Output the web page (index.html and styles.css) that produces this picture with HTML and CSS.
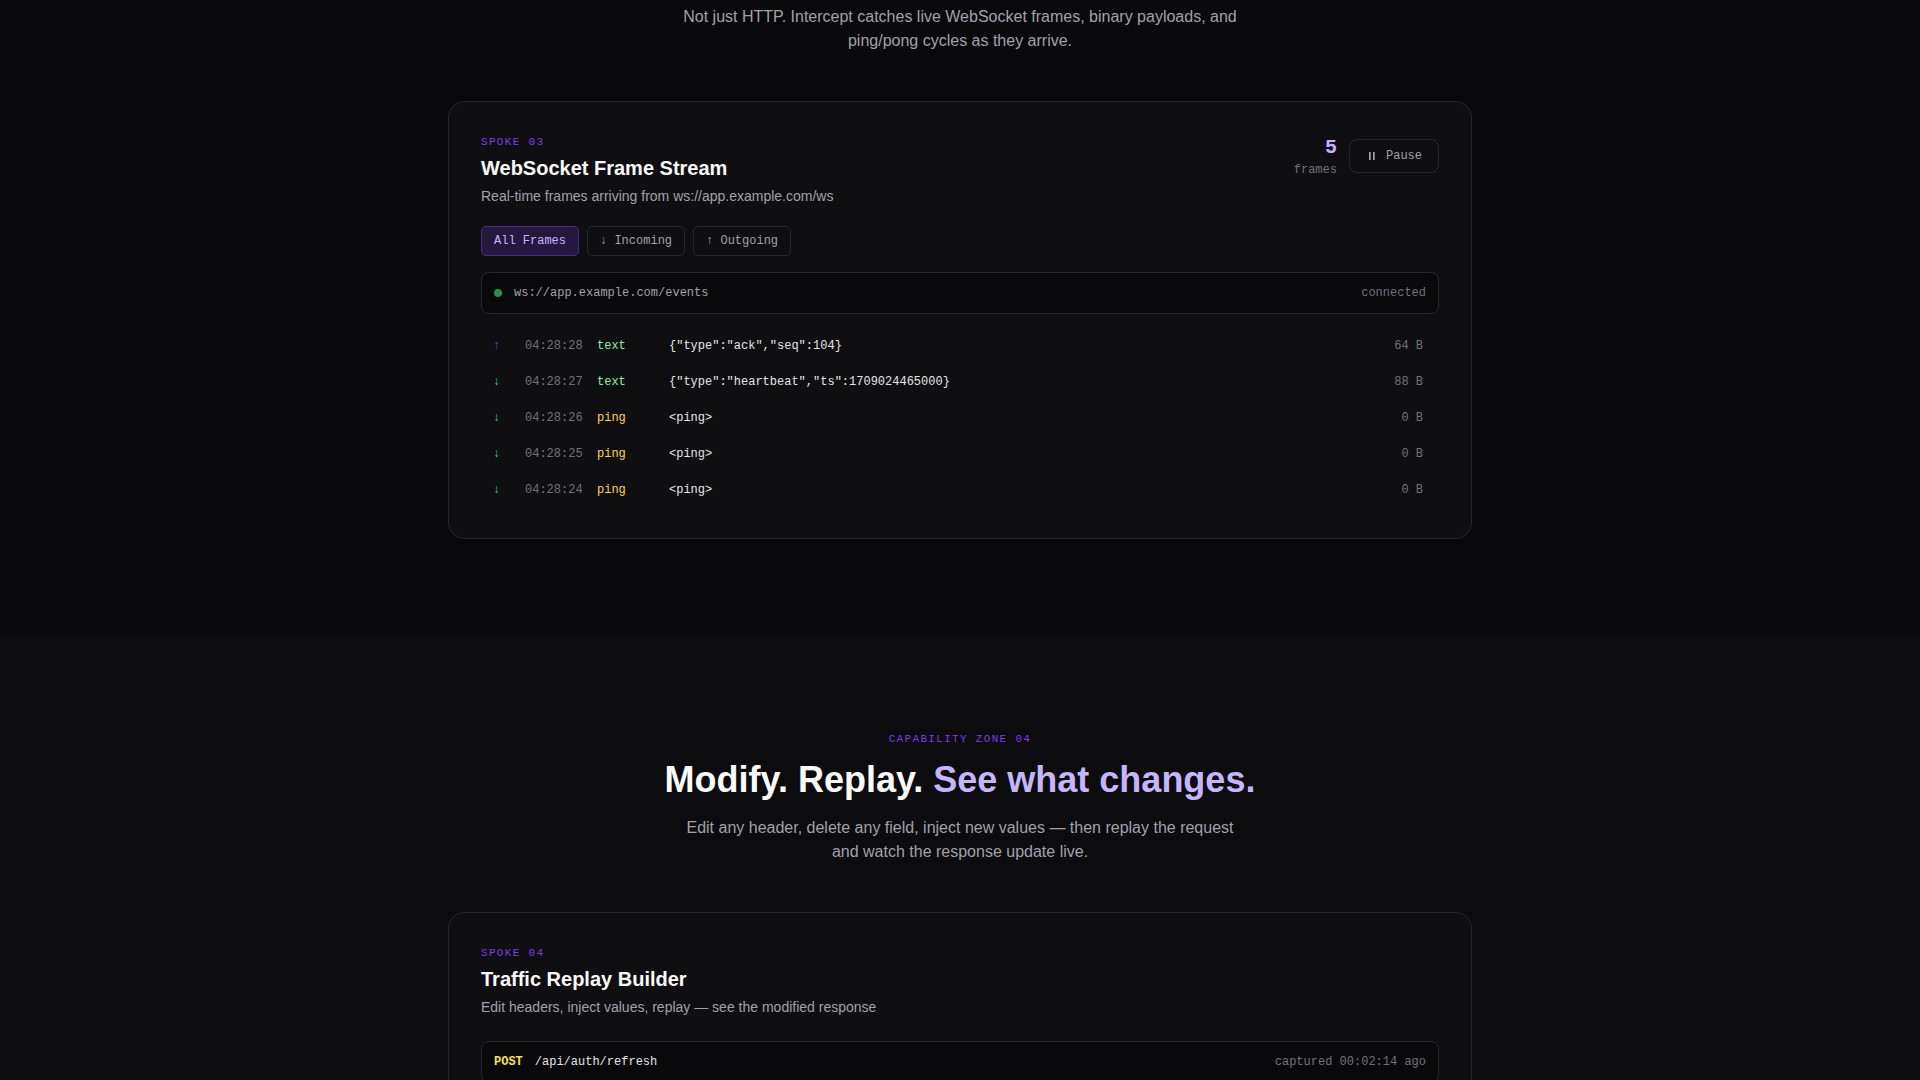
FILE: index.html
```html
<!DOCTYPE html>
<html lang="en">
<head>
  <meta charset="UTF-8">
  <meta name="viewport" content="width=device-width, initial-scale=1.0">
  <title>Intercept</title>
  <link rel="stylesheet" href="styles.css">
</head>
<body>

  <!-- Zone 03: WebSocket -->
  <section class="zone zone-first">
    <p class="zone-text">Not just HTTP. Intercept catches live WebSocket frames, binary payloads, and ping/pong cycles as they arrive.</p>

    <div class="card">
      <div class="card-header">
        <div>
          <div class="eyebrow">SPOKE 03</div>
          <h3 class="card-title">WebSocket Frame Stream</h3>
          <p class="card-desc">Real-time frames arriving from ws://app.example.com/ws</p>
        </div>
        <div class="card-actions">
          <div class="counter">
            <div class="counter-value">5</div>
            <div class="counter-label">frames</div>
          </div>
          <button type="button" class="btn-pause">
            <svg width="12" height="12" viewBox="0 0 12 12" fill="currentColor" aria-hidden="true">
              <rect x="3" y="2" width="1.7" height="8"/>
              <rect x="7" y="2" width="1.7" height="8"/>
            </svg>
            Pause
          </button>
        </div>
      </div>

      <div class="filters">
        <button type="button" class="filter active">All Frames</button>
        <button type="button" class="filter">↓ Incoming</button>
        <button type="button" class="filter">↑ Outgoing</button>
      </div>

      <div class="bar">
        <span class="dot"></span>
        <span class="bar-url">ws://app.example.com/events</span>
        <span class="bar-meta">connected</span>
      </div>

      <div class="frame-list">
        <table class="frames">
          <tbody>
            <tr>
              <td class="dir out">↑</td>
              <td class="time">04:28:28</td>
              <td class="kind text">text</td>
              <td class="payload">{"type":"ack","seq":104}</td>
              <td class="size">64 B</td>
            </tr>
            <tr>
              <td class="dir in">↓</td>
              <td class="time">04:28:27</td>
              <td class="kind text">text</td>
              <td class="payload">{"type":"heartbeat","ts":1709024465000}</td>
              <td class="size">88 B</td>
            </tr>
            <tr>
              <td class="dir in">↓</td>
              <td class="time">04:28:26</td>
              <td class="kind ping">ping</td>
              <td class="payload">&lt;ping&gt;</td>
              <td class="size">0 B</td>
            </tr>
            <tr>
              <td class="dir in">↓</td>
              <td class="time">04:28:25</td>
              <td class="kind ping">ping</td>
              <td class="payload">&lt;ping&gt;</td>
              <td class="size">0 B</td>
            </tr>
            <tr>
              <td class="dir in">↓</td>
              <td class="time">04:28:24</td>
              <td class="kind ping">ping</td>
              <td class="payload">&lt;ping&gt;</td>
              <td class="size">0 B</td>
            </tr>
          </tbody>
        </table>
      </div>
    </div>
  </section>

  <!-- Zone 04: Replay -->
  <section class="zone zone-alt">
    <div class="eyebrow zone-eyebrow">CAPABILITY ZONE 04</div>
    <h2 class="zone-title">Modify. Replay. <span class="accent">See what changes.</span></h2>
    <p class="zone-text">Edit any header, delete any field, inject new values — then replay the request and watch the response update live.</p>

    <div class="card">
      <div class="card-header card-header-wide">
        <div>
          <div class="eyebrow">SPOKE 04</div>
          <h3 class="card-title">Traffic Replay Builder</h3>
          <p class="card-desc">Edit headers, inject values, replay — see the modified response</p>
        </div>
      </div>

      <div class="bar">
        <span class="method">POST</span>
        <span class="bar-path">/api/auth/refresh</span>
        <span class="bar-meta">captured 00:02:14 ago</span>
      </div>
    </div>
  </section>

</body>
</html>
```
FILE: styles.css
```css
* {
  box-sizing: border-box;
  margin: 0;
  padding: 0;
}
body {
  font-family: "Liberation Sans", Arial, sans-serif;
  background-color: #09090b;
  color: #fafafa;
  line-height: 24px;
}

/* Zones */
.zone {
  padding: 96px 24px;
}
.zone-first {
  padding-top: 5px;
}
.zone-alt {
  background-color: #0c0c0e;
}
.zone-eyebrow {
  text-align: center;
  margin-bottom: 12px;
}
.zone-title {
  font-size: 36px;
  line-height: 40px;
  text-align: center;
  margin-bottom: 16px;
}
.accent {
  color: #c4b5fd;
}
.zone-text {
  max-width: 560px;
  margin: 0 auto 48px;
  font-size: 16px;
  text-align: center;
  color: #a1a1aa;
}
.eyebrow {
  font-family: "Liberation Mono", "Courier New", monospace;
  font-size: 11px;
  line-height: 17px;
  letter-spacing: 0.12em;
  color: #7c3aed;
}

/* Card */
.card {
  max-width: 1024px;
  margin: 0 auto;
  padding: 32px;
  background-color: #0f0f11;
  border: 1px solid #27272a;
  border-radius: 16px;
}
.card-header {
  display: flex;
  justify-content: space-between;
  align-items: flex-start;
  margin-bottom: 20px;
}
.card-header-wide {
  margin-bottom: 24px;
}
.card-title {
  margin-top: 4px;
  font-size: 20px;
  line-height: 26px;
}
.card-desc {
  margin-top: 5px;
  font-size: 14px;
  line-height: 20px;
  color: #a1a1aa;
}
.card-actions {
  display: flex;
  align-items: center;
  gap: 12px;
  font-family: "Liberation Mono", "Courier New", monospace;
}
.counter {
  text-align: right;
}
.counter-value {
  font-size: 20px;
  line-height: 28px;
  font-weight: bold;
  color: #c4b5fd;
}
.counter-label {
  font-size: 12px;
  line-height: 16px;
  color: #71717a;
}
.btn-pause {
  display: flex;
  align-items: center;
  gap: 8px;
  padding: 8px 16px;
  font-family: inherit;
  font-size: 12px;
  line-height: 16px;
  color: #a1a1aa;
  background: transparent;
  border: 1px solid #27272a;
  border-radius: 8px;
  cursor: pointer;
}

/* Filter buttons */
.filters {
  display: flex;
  gap: 8px;
  margin-bottom: 16px;
}
.filter {
  padding: 7px 12px;
  font-family: "Liberation Mono", "Courier New", monospace;
  font-size: 12px;
  line-height: 14px;
  color: #a1a1aa;
  background: transparent;
  border: 1px solid #27272a;
  border-radius: 5px;
  cursor: pointer;
}
.filter.active {
  color: #c4b5fd;
  background-color: #25183f;
  border-color: #4a2888;
}

/* Connection / request bar */
.bar {
  display: flex;
  align-items: center;
  gap: 12px;
  padding: 11px 12px;
  font-family: "Liberation Mono", "Courier New", monospace;
  font-size: 12px;
  line-height: 18px;
  background-color: #09090b;
  border: 1px solid #27272a;
  border-radius: 8px;
}
.dot {
  width: 8px;
  height: 8px;
  border-radius: 50%;
  background-color: #2f8a50;
}
.bar-url {
  color: #a1a1aa;
}
.bar-path {
  color: #e4e4e7;
}
.bar-meta {
  margin-left: auto;
  color: #71717a;
}
.method {
  font-weight: bold;
  color: #fde047;
}

/* Frame rows */
.frame-list {
  margin-top: 16px;
  padding-right: 4px;
}
.frames {
  width: 100%;
  border-collapse: collapse;
  font-family: "Liberation Mono", "Courier New", monospace;
  font-size: 12px;
  line-height: 18px;
}
.frames td {
  padding: 7px 12px 11px 0;
}
.frames tr:last-child td {
  padding-bottom: 7px;
}
.frames .dir {
  width: 44px;
  padding-left: 12px;
}
.frames .time {
  width: 72px;
  color: #71717a;
}
.frames .kind {
  width: 72px;
}
.frames .payload {
  color: #e4e4e7;
}
.frames .size {
  text-align: right;
  color: #71717a;
}
.out {
  color: #7c3aed;
}
.in {
  color: #34d399;
}
.text {
  color: #86efac;
}
.ping {
  color: #fcd34d;
}
```
